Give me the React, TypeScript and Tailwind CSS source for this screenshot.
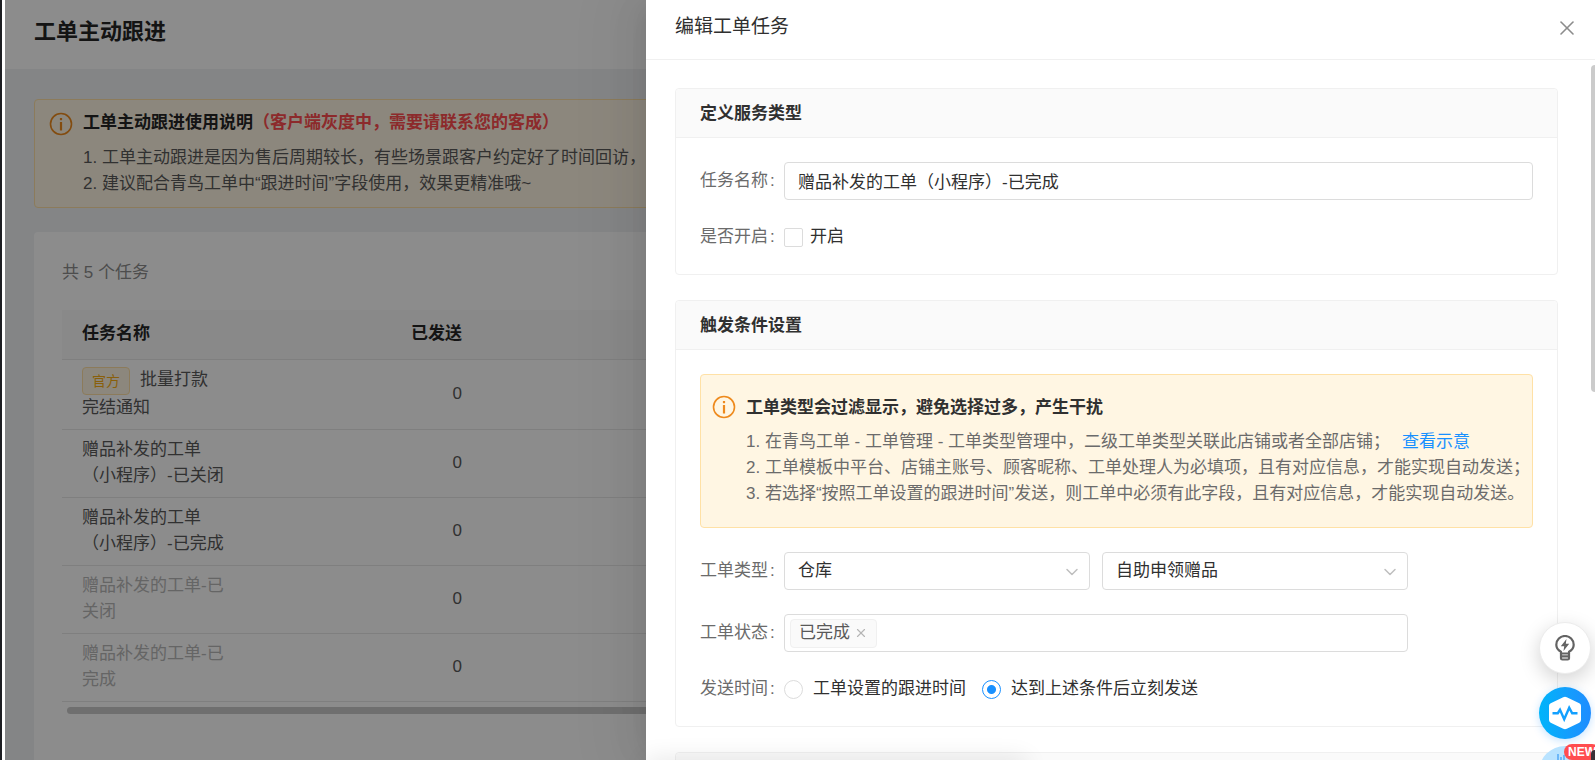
import React, { useState } from 'react';
import { ChevronDown, X } from 'lucide-react';

interface Task {
  id: number;
  name: string;
  sent: number;
  official?: boolean;
  disabled?: boolean;
}

const tasks: Task[] = [
  { id: 1, name: '批量打款完结通知', sent: 0, official: true },
  { id: 2, name: '赠品补发的工单（小程序）-已关闭', sent: 0 },
  { id: 3, name: '赠品补发的工单（小程序）-已完成', sent: 0 },
  { id: 4, name: '赠品补发的工单-已关闭', sent: 0, disabled: true },
  { id: 5, name: '赠品补发的工单-已完成', sent: 0, disabled: true }
];

const InfoIcon: React.FC = () => (
  <svg className="h-6 w-6 shrink-0 text-[#ee8a1d]" viewBox="0 0 24 24" fill="none" stroke="currentColor">
    <circle cx="12" cy="12" r="10.5" strokeWidth="1.6" />
    <path d="M12 10v8.5" strokeWidth="2.2" />
    <path d="M12 6v2.2" strokeWidth="2.2" />
  </svg>
);

const BulbIcon: React.FC = () => (
  <svg className="h-[26px] w-5" viewBox="0 0 20 26" fill="none" stroke="#636363" strokeWidth="2.2">
    <path d="M6 18.5v-1.8C3 15.2 1.3 12.7 1.3 9.7a8.7 8.7 0 0 1 17.4 0c0 3-1.7 5.5-4.7 7v1.8z" strokeLinejoin="round" />
    <path d="M6 18v5.2c0 .8.5 1.3 1.3 1.3h5.4c.8 0 1.3-.5 1.3-1.3V18M6 21.4h8" />
    <path d="M11.5 4 5.8 11.3h3.4L8.5 16l5.7-7.3h-3.4z" fill="#636363" stroke="none" />
  </svg>
);

const PulseIcon: React.FC = () => (
  <svg className="h-[34px] w-[34px]" viewBox="0 0 34 34" fill="none">
    <path
      d="M15.2 1.2a4 4 0 0 1 3.6 0l12.5 6a3 3 0 0 1 1.7 2.7v14.2a3 3 0 0 1-1.7 2.7l-12.5 6a4 4 0 0 1-3.6 0l-12.5-6A3 3 0 0 1 1 24.1V9.9a3 3 0 0 1 1.7-2.7z"
      fill="#fff"
    />
    <path d="M4.5 17.2h5.3l2.2-3.4 4.2 9.4 5-11.5 3 5.5h5.3" stroke="#12a0ff" strokeWidth="2.4" />
  </svg>
);

interface SectionProps {
  title: string;
  children?: React.ReactNode;
}

const Section: React.FC<SectionProps> = ({ title, children }) => (
  <section className="rounded border border-[#f0f0f0] bg-white">
    <h3 className="flex h-[49px] items-center rounded-t border-b border-[#f0f0f0] bg-[#fafafa] px-6 pt-0.5 font-bold text-[#303030]">
      {title}
    </h3>
    <div className="flex flex-col gap-6 p-6">{children}</div>
  </section>
);

interface FieldProps {
  label: string;
  htmlFor: string;
  children: React.ReactNode;
}

const Field: React.FC<FieldProps> = ({ label, htmlFor, children }) => (
  <div className="flex items-center">
    <label htmlFor={htmlFor} className="w-[84px] shrink-0 whitespace-nowrap text-[#6b6b6b]">
      {label}
      <span className="ml-0.5">:</span>
    </label>
    <div className="min-w-0 flex-1">{children}</div>
  </div>
);

interface SelectBoxProps {
  id: string;
  label: string;
  options: string[];
}

const SelectBox: React.FC<SelectBoxProps> = ({ id, label, options }) => (
  <div className="relative flex-1">
    <select
      id={id}
      aria-label={label}
      className="block h-[38px] w-full appearance-none rounded border border-[#dcdcdc] bg-white px-[13px] text-[#303030]"
    >
      {options.map((option) => (
        <option key={option}>{option}</option>
      ))}
    </select>
    <ChevronDown className="pointer-events-none absolute top-2.5 right-2 h-5 w-5 text-[#bfbfbf]" strokeWidth={1.8} />
  </div>
);

const TaskPage: React.FC = () => (
  <main className="h-full min-w-0 flex-1 overflow-hidden bg-[#f0f2f5]">
    <header className="bg-white px-[29px] pt-[17px] pb-[22px]">
      <h1 className="text-[22px] leading-[30px] font-bold text-[#262626]">工单主动跟进</h1>
    </header>

    <div className="px-[29px] pt-[30px]">
      {/* Usage notice */}
      <div className="flex gap-2.5 rounded border border-[#ffe1a6] bg-[#fff6e3] px-3.5 py-2.5">
        <div className="pt-0.5">
          <InfoIcon />
        </div>
        <div className="min-w-0">
          <h2 className="font-bold whitespace-nowrap text-[#262626]">
            工单主动跟进使用说明<span className="text-[#ff4d4f]">（客户端灰度中，需要请联系您的客成）</span>
          </h2>
          <ol className="mt-[9px] whitespace-nowrap text-[#595959]">
            <li>1. 工单主动跟进是因为售后周期较长，有些场景跟客户约定好了时间回访，现在可以自动跟进</li>
            <li>2. 建议配合青鸟工单中“跟进时间”字段使用，效果更精准哦~</li>
          </ol>
        </div>
      </div>

      {/* Task list */}
      <div className="mt-6 rounded bg-white px-7 pt-7 pb-24">
        <p className="text-[#8c8c8c]">共 5 个任务</p>
        <table className="mt-6 w-full table-fixed border-collapse text-left">
          <colgroup>
            <col className="w-[182px]" />
            <col className="w-[238px]" />
            <col />
          </colgroup>
          <thead>
            <tr className="h-[49px] border-b border-[#e8e8e8] bg-[#fafafa] text-[#262626]">
              <th className="px-5 font-bold">任务名称</th>
              <th className="px-5 text-right font-bold">已发送</th>
              <th />
            </tr>
          </thead>
          <tbody>
            {tasks.map((task) => (
              <tr key={task.id} className="border-b border-[#e8e8e8] text-[#595959]">
                <td className={`px-5 pt-[7px] pb-2 ${task.disabled ? 'text-[#b8b8b8]' : ''}`}>
                  {task.official && (
                    <span className="mr-2.5 inline-block rounded border border-[#ffe1a6] bg-[#fff6e3] px-[9px] align-middle text-sm leading-[26px] text-[#faad14]">
                      官方
                    </span>
                  )}
                  {task.name}
                </td>
                <td className="px-5 text-right">{task.sent}</td>
                <td />
              </tr>
            ))}
          </tbody>
        </table>
        <div className="mt-[5px] ml-[5px] h-[7px] rounded-full bg-[#cacaca]" />
      </div>
    </div>
  </main>
);

const App: React.FC = () => {
  const [name, setName] = useState('赠品补发的工单（小程序）-已完成');
  const [enabled, setEnabled] = useState(false);
  const [statuses, setStatuses] = useState(['已完成']);
  const [sendTime, setSendTime] = useState('now');

  const sendOptions = [
    { value: 'follow', label: '工单设置的跟进时间' },
    { value: 'now', label: '达到上述条件后立刻发送' }
  ];

  return (
    <div className="relative flex h-screen overflow-hidden bg-white font-['Liberation_Sans','Noto_Sans_CJK_SC',sans-serif] text-[17px] leading-[26px]">
      <div className="mr-[3px] w-0.5 shrink-0 bg-[#1d1e22]" />
      <div className="relative flex min-w-0 flex-1">
        <TaskPage />
        <div className="absolute inset-0 bg-black/45" />
      </div>

      {/* Edit drawer */}
      <aside
        role="dialog"
        aria-label="编辑工单任务"
        className="absolute inset-y-0 right-0 flex w-[59.5%] flex-col bg-white shadow-[-7px_0_19px_-10px_rgba(0,0,0,0.08),-11px_0_34px_0_rgba(0,0,0,0.05),-14px_0_58px_19px_rgba(0,0,0,0.03)]"
      >
        <div className="flex h-[60px] shrink-0 items-start justify-between border-b border-[#f0f0f0] pt-3.5 pr-4 pl-[29px]">
          <h2 className="text-[19px] text-[#303030]">编辑工单任务</h2>
          <button type="button" aria-label="关闭" className="pt-0.5 text-[#8c8c8c]">
            <X className="h-6 w-6" strokeWidth={1.6} />
          </button>
        </div>

        <div className="flex min-h-0 flex-1 flex-col gap-[25px] overflow-hidden pt-7 pr-[37px] pl-[29px]">
          <Section title="定义服务类型">
            <Field label="任务名称" htmlFor="task-name">
              <input
                id="task-name"
                type="text"
                value={name}
                onChange={(e) => setName(e.target.value)}
                className="block h-[38px] w-full rounded border border-[#dcdcdc] px-[13px] pb-0.5 text-[#303030]"
              />
            </Field>
            <Field label="是否开启" htmlFor="task-enabled">
              <label className="flex items-center gap-[7px] text-[#303030]">
                <input
                  id="task-enabled"
                  type="checkbox"
                  checked={enabled}
                  onChange={(e) => setEnabled(e.target.checked)}
                  className="h-[19px] w-[19px] appearance-none rounded-xs border border-[#dcdcdc] bg-white checked:border-[#1890ff] checked:bg-[#1890ff]"
                />
                开启
              </label>
            </Field>
          </Section>

          <Section title="触发条件设置">
            <div className="flex gap-2.5 rounded border border-[#ffe1a6] bg-[#fff6e3] py-5 pr-3 pl-[11px]">
              <InfoIcon />
              <div className="min-w-0">
                <h4 className="font-bold text-[#303030]">工单类型会过滤显示，避免选择过多，产生干扰</h4>
                <ol className="mt-2 whitespace-nowrap text-[#6b6b6b]">
                  <li>
                    1. 在青鸟工单 - 工单管理 - 工单类型管理中，二级工单类型关联此店铺或者全部店铺；
                    <a href="#example" className="ml-3 text-[#1890ff]">
                      查看示意
                    </a>
                  </li>
                  <li>2. 工单模板中平台、店铺主账号、顾客昵称、工单处理人为必填项，且有对应信息，才能实现自动发送；</li>
                  <li>3. 若选择“按照工单设置的跟进时间”发送，则工单中必须有此字段，且有对应信息，才能实现自动发送。</li>
                </ol>
              </div>
            </div>

            <Field label="工单类型" htmlFor="order-type">
              <div className="flex w-5/6 gap-3">
                <SelectBox id="order-type" label="工单类型" options={['仓库', '售后', '售前']} />
                <SelectBox id="order-subtype" label="二级工单类型" options={['自助申领赠品', '补发']} />
              </div>
            </Field>

            <Field label="工单状态" htmlFor="order-status">
              <div className="flex h-[38px] w-5/6 items-center rounded border border-[#dcdcdc] px-[5px]">
                {statuses.map((status) => (
                  <span
                    key={status}
                    className="flex h-[29px] shrink-0 items-center gap-1 rounded border border-[#f0f0f0] bg-[#fafafa] px-2 text-[#595959]"
                  >
                    {status}
                    <button
                      type="button"
                      aria-label={`移除${status}`}
                      onClick={() => setStatuses(statuses.filter((s) => s !== status))}
                      className="text-[#b5b5b5]"
                    >
                      <X className="h-3.5 w-3.5" strokeWidth={2} />
                    </button>
                  </span>
                ))}
                <input id="order-status" type="text" className="min-w-0 flex-1 px-2 outline-none" />
              </div>
            </Field>

            <Field label="发送时间" htmlFor="send-follow">
              <div className="flex gap-4">
                {sendOptions.map((option) => (
                  <label key={option.value} className="flex items-center gap-2.5 text-[#303030]">
                    <input
                      id={`send-${option.value}`}
                      type="radio"
                      name="send-time"
                      checked={sendTime === option.value}
                      onChange={() => setSendTime(option.value)}
                      className="h-[19px] w-[19px] appearance-none rounded-full border border-[#dcdcdc] bg-white checked:border-[#1890ff] checked:bg-[radial-gradient(circle,#1890ff_0,#1890ff_4px,#fff_5px)]"
                    />
                    {option.label}
                  </label>
                ))}
              </div>
            </Field>
          </Section>

          <Section title="" />
        </div>

        {/* Soft shade along the bottom edge */}
        <div className="pointer-events-none absolute -bottom-4 left-0 h-4 w-2/5 shadow-[0_0_24px_rgba(0,0,0,0.12)]" />
        <div className="absolute top-[65px] -right-1 h-[327px] w-2 rounded-full bg-[#cbcbcb]" />
      </aside>

      {/* Floating helpers */}
      <div className="absolute top-[622px] right-1 flex flex-col items-center gap-[13px]">
        <button
          type="button"
          aria-label="提示"
          className="flex h-[52px] w-[52px] items-center justify-center rounded-full border border-[#ececec] bg-white shadow-[0_6px_20px_rgba(0,0,0,0.18)]"
        >
          <BulbIcon />
        </button>
        <button
          type="button"
          aria-label="监控"
          className="flex h-[52px] w-[52px] items-center justify-center rounded-full bg-linear-to-r from-[#00b4fa] to-[#1e8cff] shadow-[0_2px_8px_rgba(24,144,255,0.25)]"
        >
          <PulseIcon />
        </button>
        <button type="button" className="relative -mt-1.5 h-[52px] w-[52px] rounded-full bg-[#b9e3ff]">
          <svg className="absolute top-2 left-4 h-5 w-5" viewBox="0 0 20 20" stroke="#3a9bf5" strokeWidth="1.2">
            <path d="M3 0v12M6 3v9M9 1v11" />
          </svg>
          <span className="absolute -top-0.5 left-[25px] rounded-full bg-[#ff4d4f] px-1 text-xs leading-4 font-black text-white">
            NEW
          </span>
          <span className="absolute top-1 -right-2 h-4 w-2 rounded-l bg-[#3a3238]" />
        </button>
      </div>
    </div>
  );
};

export default App;
